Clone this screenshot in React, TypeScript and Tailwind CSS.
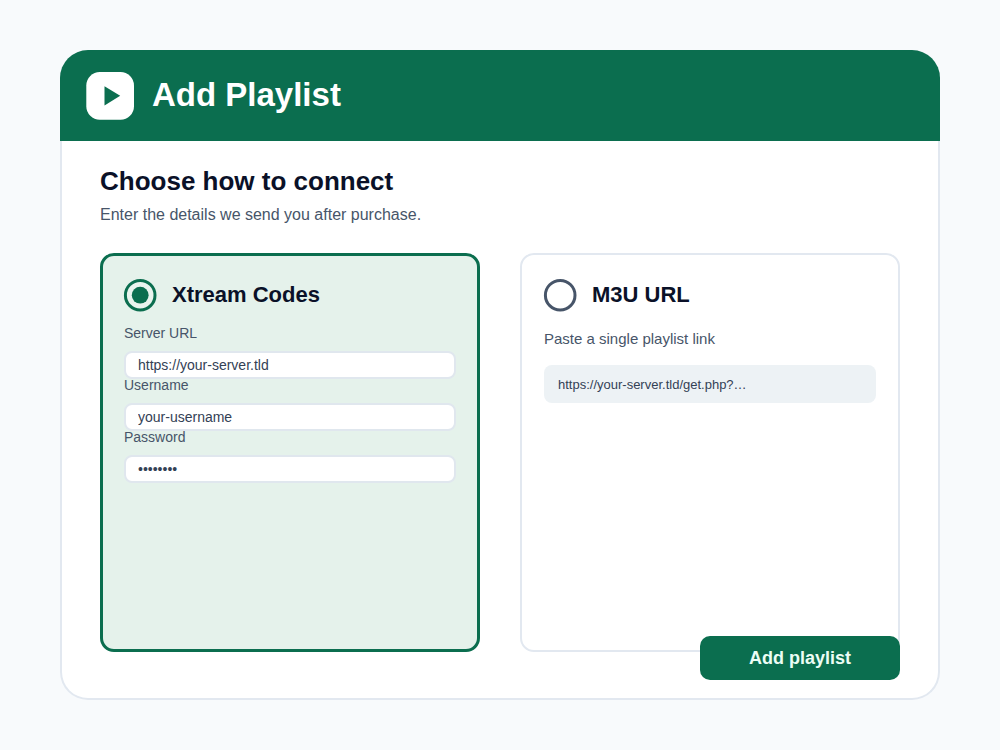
import { useState } from "react";
import type { ReactNode } from "react";

type Method = "xtream" | "m3u";

function MethodRadio({
  value,
  selected,
  onSelect,
  children,
}: {
  value: Method;
  selected: boolean;
  onSelect: (value: Method) => void;
  children: ReactNode;
}) {
  return (
    <label className="flex items-center gap-4">
      <input
        type="radio"
        name="method"
        value={value}
        checked={selected}
        onChange={() => onSelect(value)}
        className="peer sr-only"
      />
      <svg
        viewBox="0 0 32 32"
        className={selected ? "size-8 shrink-0 overflow-visible text-[#0b6e4f]" : "size-8 shrink-0 overflow-visible text-[#475569]"}
        aria-hidden="true"
      >
        <circle cx="16.2" cy="16.2" r="14.8" fill="#ffffff" fillOpacity={selected ? 0.15 : 1} stroke="currentColor" strokeWidth="3" />
        {selected && <circle cx="16.2" cy="16.2" r="8.4" fill="currentColor" />}
      </svg>
      <span className="text-[22px] leading-8 font-bold text-[#0a1128]">{children}</span>
    </label>
  );
}

function Field({ id, label, type, value }: { id: string; label: string; type: string; value: string }) {
  return (
    <div className="flex flex-col gap-3">
      <label htmlFor={id} className="text-sm leading-3 text-[#475569]">
        {label}
      </label>
      <input
        id={id}
        type={type}
        defaultValue={value}
        className="h-7 w-full rounded-lg border-2 border-[#e0e7ee] bg-white px-3 text-sm text-[#334155]"
      />
    </div>
  );
}

export default function App() {
  const [method, setMethod] = useState<Method>("xtream");
  const active = "border-[3px] border-[#0b6e4f] bg-[#e5f2eb] px-[21px] pt-[23px]";
  const idle = "border-2 border-[#e2e8f0] bg-white px-[22px] pt-6";

  return (
    <div className="flex min-h-screen flex-col bg-[#f8fafc] px-[60px] py-[50px] font-['Liberation_Sans',Arial,sans-serif]">
      <header className="flex items-center gap-[18px] rounded-t-[28px] bg-[#0b6e4f] px-[26px] pt-[22px] pb-[21px]">
        <svg viewBox="0 0 48 48" className="size-12" aria-hidden="true">
          <rect x="0.3" width="47.7" height="47.7" rx="13.5" fill="#ffffff" />
          <path d="M18.5 14.2v19.2L34.2 23.8z" fill="#0b6e4f" />
        </svg>
        <h1 className="pb-0.5 text-[33px] leading-10 font-bold text-white">Add Playlist</h1>
      </header>

      <main className="flex flex-1 flex-col rounded-b-[28px] border-x-2 border-b-2 border-[#e2e8f0] bg-white px-[38px] pt-6 pb-[18px]">
        <h2 className="text-[26px] leading-8 font-bold text-[#0a1128]">Choose how to connect</h2>
        <p className="mt-1.5 text-base text-[#475569]">Enter the details we send you after purchase.</p>

        <form className="mt-[26px] flex flex-1 flex-col" onSubmit={(event) => event.preventDefault()}>
          <div className="grid flex-1 grid-cols-2 gap-10">
            <section className={`rounded-[14px] ${method === "xtream" ? active : idle}`}>
              <MethodRadio value="xtream" selected={method === "xtream"} onSelect={setMethod}>
                Xtream Codes
              </MethodRadio>
              <div className="mt-4">
                <Field id="server" label="Server URL" type="text" value="https://your-server.tld" />
                <Field id="username" label="Username" type="text" value="your-username" />
                <Field id="password" label="Password" type="password" value="password" />
              </div>
            </section>

            <section className={`rounded-[14px] ${method === "m3u" ? active : idle}`}>
              <MethodRadio value="m3u" selected={method === "m3u"} onSelect={setMethod}>
                M3U URL
              </MethodRadio>
              <div className="mt-4 flex flex-col gap-3.5">
                <label htmlFor="playlist" className="text-[15px] leading-6 text-[#475569]">
                  Paste a single playlist link
                </label>
                <input
                  id="playlist"
                  type="text"
                  defaultValue="https://your-server.tld/get.php?…"
                  className="h-[38px] w-full rounded-lg bg-[#edf2f5] px-3.5 text-[13px] text-[#334155]"
                />
              </div>
            </section>
          </div>
          <button
            type="submit"
            className="z-10 -mt-4 h-11 w-[200px] self-end rounded-[10px] bg-[#0b6e4f] text-lg font-bold text-[#ecfdf5]"
          >
            Add playlist
          </button>
        </form>
      </main>
    </div>
  );
}
